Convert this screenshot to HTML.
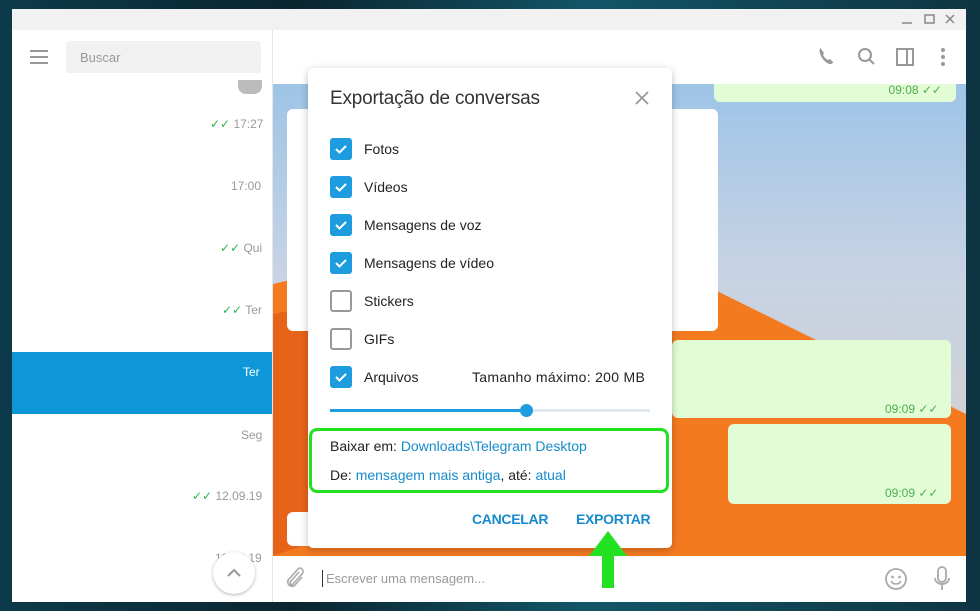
<!DOCTYPE html><html><head><meta charset="utf-8"><style>
*{box-sizing:border-box;margin:0;padding:0}
body{width:980px;height:611px;overflow:hidden;position:relative;font-family:"Liberation Sans",sans-serif;background:linear-gradient(90deg,#0d3a4a,#0a2530 30%,#125566 60%,#0e3442);}
.a{position:absolute}
.t{color:#999;font-size:12px}
.ck{position:absolute;left:330px;width:22px;height:22px;border-radius:3px;background:#1e9ce0}
.ck svg{position:absolute;left:4px;top:4px}
.un{background:#fff;border:2px solid #999}
.lbl{position:absolute;left:364px;font-size:14px;color:#222;white-space:nowrap}
.lk{color:#168acd}
</style></head><body>
<div class="a" style="left:12px;top:9px;width:954px;height:21px;background:#f1f1f1"></div>
<svg class="a" style="left:900px;top:12px" width="60" height="16"><path d="M2 11h10" stroke="#888" stroke-width="1.5"/><rect x="25" y="3" width="9" height="8" fill="none" stroke="#888" stroke-width="1.5"/><path d="M46 3l8 8M54 3l-8 8" stroke="#888" stroke-width="1.5"/></svg>
<div class="a" style="left:12px;top:30px;width:261px;height:572px;background:#fff;border-right:1px solid #e6e6e6"></div>
<div class="a" style="left:30px;top:50px;width:18px;height:2px;background:#999;box-shadow:0 6px #999,0 12px #999"></div>
<div class="a" style="left:66px;top:41px;width:195px;height:32px;background:#f1f1f1;border-radius:3px;font-size:13px;color:#999;padding:9px 14px">Buscar</div>
<div class="a" style="left:238px;top:80px;width:24px;height:14px;background:#bbb;border-radius:0 0 8px 8px"></div>
<div class="a t" style="left:210px;top:117px"><span style="color:#2db34a">✓✓</span> 17:27</div>
<div class="a t" style="left:231px;top:179px">17:00</div>
<div class="a t" style="left:220px;top:241px"><span style="color:#2db34a">✓✓</span> Qui</div>
<div class="a t" style="left:222px;top:303px"><span style="color:#2db34a">✓✓</span> Ter</div>
<div class="a" style="left:12px;top:352px;width:260px;height:62px;background:#0d96d8"></div>
<div class="a t" style="left:243px;top:365px;color:#fff">Ter</div>
<div class="a t" style="left:241px;top:428px">Seg</div>
<div class="a t" style="left:192px;top:489px"><span style="color:#2db34a">✓✓</span> 12.09.19</div>
<div class="a t" style="left:215px;top:551px">12.09.19</div>
<div class="a" style="left:213px;top:552px;width:42px;height:42px;border-radius:50%;background:#fff;box-shadow:0 1px 3px rgba(0,0,0,.3)"></div>
<svg class="a" style="left:225px;top:564px" width="18" height="18"><path d="M3 12l6-6 6 6" stroke="#999" stroke-width="2" fill="none"/></svg>
<div class="a" style="left:273px;top:30px;width:693px;height:54px;background:#fff"></div>
<svg class="a" style="left:815px;top:44px" width="140" height="26">
<path d="M6 4c-2 1-2 4 0 8s6 8 9 8c2 0 3-1 3-2l-3-3-2 1c-2-1-4-3-5-5l1-2-3-4z" fill="#999"/>
<circle cx="50" cy="11" r="6" fill="none" stroke="#999" stroke-width="2"/><path d="M54 15l5 5" stroke="#999" stroke-width="2"/>
<rect x="82" y="5" width="16" height="16" fill="none" stroke="#999" stroke-width="2"/><path d="M92 5v16" stroke="#999" stroke-width="2"/>
<circle cx="128" cy="6" r="2" fill="#999"/><circle cx="128" cy="13" r="2" fill="#999"/><circle cx="128" cy="20" r="2" fill="#999"/></svg>
<div class="a" style="left:273px;top:84px;width:693px;height:472px;background:linear-gradient(180deg,#9ec4e6,#c7d3e4 40%,#d8cfc8)"></div>
<svg class="a" style="left:273px;top:84px" width="693" height="472"><polygon points="0,200 250,140 330,150 450,210 693,330 693,472 0,472" fill="#f47a20"/><polygon points="0,230 150,200 250,280 150,420 0,472" fill="#e8631a"/></svg>
<div class="a" style="left:287px;top:109px;width:431px;height:222px;background:#fff;border-radius:6px"></div>
<div class="a" style="left:714px;top:84px;width:242px;height:18px;background:#e2fcd6;border-radius:0 0 6px 6px;font-size:12px;color:#4fae4e;text-align:right;padding:0 14px;line-height:12px">09:08 ✓✓</div>
<div class="a" style="left:672px;top:340px;width:279px;height:78px;background:#e2fcd6;border-radius:6px"></div>
<div class="a" style="left:885px;top:402px;font-size:12px;color:#4fae4e">09:09 ✓✓</div>
<div class="a" style="left:728px;top:424px;width:223px;height:80px;background:#e2fcd6;border-radius:6px"></div>
<div class="a" style="left:885px;top:486px;font-size:12px;color:#4fae4e">09:09 ✓✓</div>
<div class="a" style="left:287px;top:512px;width:40px;height:34px;background:#fff;border-radius:6px"></div>
<div class="a" style="left:273px;top:556px;width:693px;height:46px;background:#fff"></div>
<svg class="a" style="left:284px;top:566px" width="22" height="24"><path d="M15 6l-8 9c-2 2 0 5 2 3l9-10c3-3-1-8-4-5l-9 10c-4 4 2 10 6 6l7-8" stroke="#aaa" stroke-width="1.6" fill="none"/></svg>
<div class="a" style="left:322px;top:570px;width:1px;height:17px;background:#333"></div>
<div class="a" style="left:326px;top:571px;font-size:13px;color:#999">Escrever uma mensagem...</div>
<svg class="a" style="left:884px;top:567px" width="24" height="24"><circle cx="12" cy="12" r="10" fill="none" stroke="#aaa" stroke-width="1.8"/><circle cx="8.5" cy="10" r="1.4" fill="#aaa"/><circle cx="15.5" cy="10" r="1.4" fill="#aaa"/><path d="M7 14c2 4 8 4 10 0" stroke="#aaa" stroke-width="1.6" fill="none"/></svg>
<svg class="a" style="left:932px;top:566px" width="20" height="26"><rect x="6" y="1" width="8" height="15" rx="4" fill="none" stroke="#aaa" stroke-width="1.8"/><path d="M3 12c0 8 14 8 14 0M10 19v5" stroke="#aaa" stroke-width="1.8" fill="none"/></svg>
<div class="a" style="left:308px;top:68px;width:364px;height:480px;background:#fff;border-radius:5px;box-shadow:0 2px 8px rgba(0,0,0,.25)"></div>
<div class="a" style="left:330px;top:88px;font-size:19px;color:#333;letter-spacing:-0.2px">Exportação de conversas</div>
<svg class="a" style="left:634px;top:90px" width="16" height="16"><path d="M2 2l12 12M14 2L2 14" stroke="#999" stroke-width="1.8"/></svg>
<svg width="0" height="0" style="position:absolute"><defs><path id="c" d="M2 7l3.5 3.5L12 4" stroke="#fff" stroke-width="2" fill="none"/></defs></svg>
<div class="ck" style="top:138px"><svg width="14" height="14"><use href="#c"/></svg></div><div class="lbl" style="top:141px">Fotos</div>
<div class="ck" style="top:176px"><svg width="14" height="14"><use href="#c"/></svg></div><div class="lbl" style="top:179px">Vídeos</div>
<div class="ck" style="top:214px"><svg width="14" height="14"><use href="#c"/></svg></div><div class="lbl" style="top:217px">Mensagens de voz</div>
<div class="ck" style="top:252px"><svg width="14" height="14"><use href="#c"/></svg></div><div class="lbl" style="top:255px">Mensagens de vídeo</div>
<div class="ck un" style="top:290px"></div><div class="lbl" style="top:293px">Stickers</div>
<div class="ck un" style="top:328px"></div><div class="lbl" style="top:331px">GIFs</div>
<div class="ck" style="top:366px"><svg width="14" height="14"><use href="#c"/></svg></div><div class="lbl" style="top:369px">Arquivos</div>
<div class="lbl" style="left:472px;top:369px;letter-spacing:0.3px">Tamanho máximo: 200 MB</div>
<div class="a" style="left:330px;top:409px;width:320px;height:3px;background:#dfe9ef"></div>
<div class="a" style="left:330px;top:409px;width:196px;height:3px;background:#1e9ce0"></div>
<div class="a" style="left:520px;top:404px;width:13px;height:13px;border-radius:50%;background:#1e9ce0"></div>
<div class="a" style="left:309px;top:428px;width:360px;height:65px;border:3px solid #22e022;border-radius:8px"></div>
<div class="lbl" style="left:330px;top:438px">Baixar em: <span class="lk">Downloads\Telegram Desktop</span></div>
<div class="lbl" style="left:330px;top:467px">De: <span class="lk">mensagem mais antiga</span>, até: <span class="lk">atual</span></div>
<div class="a" style="left:472px;top:511px;font-size:14px;font-weight:bold;color:#168acd;letter-spacing:-0.3px">CANCELAR</div>
<div class="a" style="left:576px;top:511px;font-size:14px;font-weight:bold;color:#168acd;letter-spacing:-0.3px">EXPORTAR</div>
<svg class="a" style="left:586px;top:528px" width="44" height="62"><path d="M22 3L3 28h13v32h12V28h13z" fill="#22e022"/><path d="M22 12L13 24h8v34h2V24h8z" fill="#fff" opacity="0"/></svg>
</body></html>
